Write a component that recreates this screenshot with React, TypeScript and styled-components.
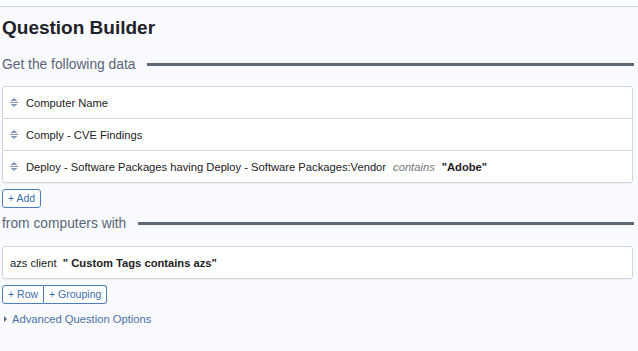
import React from "react";
import styled, { createGlobalStyle } from "styled-components";

const Global = createGlobalStyle`
  html, body { margin: 0; padding: 0; background: #f8fafd; }
  body { font-family: "Liberation Sans", Arial, sans-serif; color: #222; }
`;

const Page = styled.div`
  width: 638px;
  height: 351px;
  overflow: hidden;
  background: #f8fafd;
`;

const TopBar = styled.div`
  height: 6px;
  border-bottom: 1px solid #cfd6e0;
  background: #fbfcfe;
`;

const Content = styled.div`
  padding: 0 4px 0 2px;
  display: flex;
  flex-direction: column;
`;

const Title = styled.h1`
  margin: 9px 0 0 0;
  font-size: 19px;
  line-height: 24px;
  font-weight: bold;
  color: #1f2329;
`;

const SectionHeader = styled.div<{ $mt: number }>`
  display: flex;
  align-items: center;
  gap: 12px;
  margin-top: ${(p) => p.$mt}px;
  height: 18px;
  font-size: 13.8px;
  color: #5b6476;
`;

const Rule = styled.div`
  flex: 1;
  height: 3px;
  background: #606676;
`;

const Card = styled.div<{ $mt: number }>`
  margin-top: ${(p) => p.$mt}px;
  margin-right: 1px;
  background: #fff;
  border: 1px solid #cfd6e0;
  border-radius: 3px;
  box-shadow: 0 1px 1px rgba(0, 0, 0, 0.05);
`;

const Row = styled.div`
  height: 31px;
  display: flex;
  align-items: center;
  padding-left: 7px;
  font-size: 11.2px;
  color: #222;
  white-space: pre;
  & + & {
    border-top: 1px solid #cfd6e0;
  }
`;

const Handle = styled.svg`
  width: 8px;
  height: 9px;
  margin-right: 8px;
  flex: none;
`;

const Op = styled.span`
  font-style: italic;
  color: #777;
  margin: 0 7px;
`;

const Bold = styled.span`
  font-weight: bold;
  color: #222;
`;

const ButtonGroup = styled.div<{ $mt: number }>`
  margin-top: ${(p) => p.$mt}px;
  display: flex;
  align-self: flex-start;
`;

const Btn = styled.button`
  font-family: "Liberation Sans", Arial, sans-serif;
  font-size: 10.5px;
  color: #3d6ea8;
  background: #fff;
  border: 1px solid #4f7db5;
  height: 19px;
  padding: 0 5px;
  line-height: 17px;
  border-radius: 0;
  cursor: pointer;
  &:first-child { border-top-left-radius: 3px; border-bottom-left-radius: 3px; }
  &:last-child { border-top-right-radius: 3px; border-bottom-right-radius: 3px; }
  & + & { border-left: none; }
`;

const Advanced = styled.div`
  margin-top: 9px;
  display: flex;
  align-items: center;
  gap: 5px;
  font-size: 11.2px;
  color: #4b6fa3;
  padding-left: 2px;
`;

const Caret = styled.span`
  width: 0;
  height: 0;
  border-top: 3px solid transparent;
  border-bottom: 3px solid transparent;
  border-left: 3px solid #5a6478;
`;

const SortIcon = () => (
  <Handle viewBox="0 0 8 9">
    <path d="M0.5 3 L4 0 L7.5 3 Z" fill="#8395b2" />
    <rect x="0" y="4" width="8" height="1" fill="#8395b2" />
    <path d="M0.5 6 L4 9 L7.5 6 Z" fill="#8395b2" />
  </Handle>
);

export default function App() {
  return (
    <Page>
      <Global />
      <TopBar />
      <Content>
        <Title>Question Builder</Title>
        <SectionHeader $mt={15}>
          <span>Get the following data</span>
          <Rule />
        </SectionHeader>
        <Card $mt={13}>
          <Row>
            <SortIcon />
            Computer Name
          </Row>
          <Row>
            <SortIcon />
            Comply - CVE Findings
          </Row>
          <Row>
            <SortIcon />
            Deploy - Software Packages having Deploy - Software Packages:Vendor
            <Op>contains</Op>
            <Bold>"Adobe"</Bold>
          </Row>
        </Card>
        <ButtonGroup $mt={6}>
          <Btn>+ Add</Btn>
        </ButtonGroup>
        <SectionHeader $mt={6}>
          <span>from computers with</span>
          <Rule />
        </SectionHeader>
        <Card $mt={14}>
          <Row>
            azs client  <Bold>" Custom Tags contains azs"</Bold>
          </Row>
        </Card>
        <ButtonGroup $mt={6}>
          <Btn>+ Row</Btn>
          <Btn>+ Grouping</Btn>
        </ButtonGroup>
        <Advanced>
          <Caret />
          Advanced Question Options
        </Advanced>
      </Content>
    </Page>
  );
}
